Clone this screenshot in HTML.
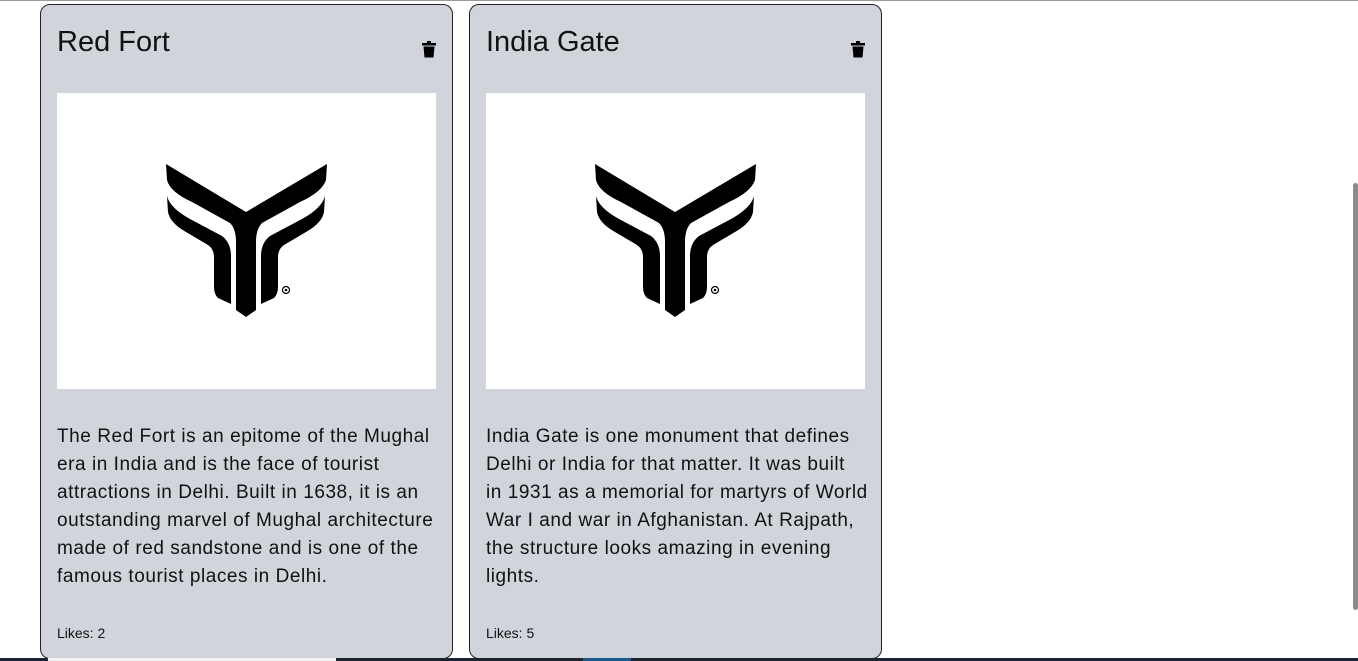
<!DOCTYPE html>
<html><head><style>
html,body{margin:0;padding:0;background:#fff;width:1358px;height:661px;overflow:hidden;font-family:"Liberation Sans",sans-serif;}
.topline{position:absolute;left:0;top:0;width:1358px;height:1px;background:#999;}
.card{position:absolute;top:4px;width:413px;height:655px;background:#d1d5db;border:1px solid #222;border-radius:10px;box-sizing:border-box;}
.title{position:absolute;left:16px;top:21px;font-size:29px;color:#111;}
.trash{position:absolute;left:381px;top:36px;}
.img{position:absolute;left:16px;top:88px;width:379px;height:296px;background:#fff;}
.desc{position:absolute;left:16px;top:418px;width:395px;font-size:19px;line-height:28px;color:#111;white-space:nowrap;letter-spacing:0.55px;}
.likes{position:absolute;left:16px;top:620px;font-size:14px;color:#111;}
.bar{position:absolute;top:658px;height:3px;}
.sb{position:absolute;left:1353px;top:183px;width:5px;height:427px;background:#8a8a8a;border-radius:3px;}
</style></head><body>
<div class="topline"></div>
<div class="card" style="left:40px">
 <div class="title">Red Fort</div>
 <svg class="trash" width="14" height="17" viewBox="0 0 14 17"><rect x="0" y="2" width="14" height="2.5" fill="#000"/><rect x="5" y="0" width="4" height="2" fill="#000"/><path d="M1.5 5.5h11l-1 11h-9z" fill="#000"/></svg>
 <div class="img"><svg width="379" height="296" viewBox="57 93 379 296">
  <g fill="#000">
  <path d="M166,164 L246,212 L327,164 L326,180 Q322,192 300,202 L262,223 Q256,229 256,242 L256,310 L246,317 L236,310 L236,242 Q236,229 230,223 L192,202 Q170,192 167,180 Z"/>
  <path d="M167,196 Q170,208 190,219 L222,236 Q231,243 231,256 L231,304 L218,298 Q214,294 214,287 L214,257 Q214,249 208,245 L186,232 Q170,223 168,212 Z"/>
  <path d="M325,196 Q322,208 302,219 L270,236 Q261,243 261,256 L261,304 L274,298 Q278,294 278,287 L278,257 Q278,249 284,245 L306,232 Q322,223 324,212 Z"/>
  <circle cx="286" cy="290" r="3.5" fill="none" stroke="#000" stroke-width="1.2"/><circle cx="286" cy="290" r="1.3"/>
  </g></svg></div>
 <div class="desc">The Red Fort is an epitome of the Mughal<br>era in India and is the face of tourist<br>attractions in Delhi. Built in 1638, it is an<br>outstanding marvel of Mughal architecture<br>made of red sandstone and is one of the<br>famous tourist places in Delhi.</div>
 <div class="likes">Likes: 2</div>
</div>
<div class="card" style="left:469px">
 <div class="title">India Gate</div>
 <svg class="trash" width="14" height="17" viewBox="0 0 14 17"><rect x="0" y="2" width="14" height="2.5" fill="#000"/><rect x="5" y="0" width="4" height="2" fill="#000"/><path d="M1.5 5.5h11l-1 11h-9z" fill="#000"/></svg>
 <div class="img"><svg width="379" height="296" viewBox="57 93 379 296">
  <g fill="#000">
  <path d="M166,164 L246,212 L327,164 L326,180 Q322,192 300,202 L262,223 Q256,229 256,242 L256,310 L246,317 L236,310 L236,242 Q236,229 230,223 L192,202 Q170,192 167,180 Z"/>
  <path d="M167,196 Q170,208 190,219 L222,236 Q231,243 231,256 L231,304 L218,298 Q214,294 214,287 L214,257 Q214,249 208,245 L186,232 Q170,223 168,212 Z"/>
  <path d="M325,196 Q322,208 302,219 L270,236 Q261,243 261,256 L261,304 L274,298 Q278,294 278,287 L278,257 Q278,249 284,245 L306,232 Q322,223 324,212 Z"/>
  <circle cx="286" cy="290" r="3.5" fill="none" stroke="#000" stroke-width="1.2"/><circle cx="286" cy="290" r="1.3"/>
  </g></svg></div>
 <div class="desc">India Gate is one monument that defines<br>Delhi or India for that matter. It was built<br>in 1931 as a memorial for martyrs of World<br>War I and war in Afghanistan. At Rajpath,<br>the structure looks amazing in evening<br>lights.</div>
 <div class="likes">Likes: 5</div>
</div>
<div class="sb"></div>
<div class="bar" style="left:0;width:1358px;background:#1b2430"></div>
<div class="bar" style="left:48px;width:288px;background:#f2f2f2"></div>
<div class="bar" style="left:583px;width:48px;background:#1e5a8a"></div>
</body></html>
